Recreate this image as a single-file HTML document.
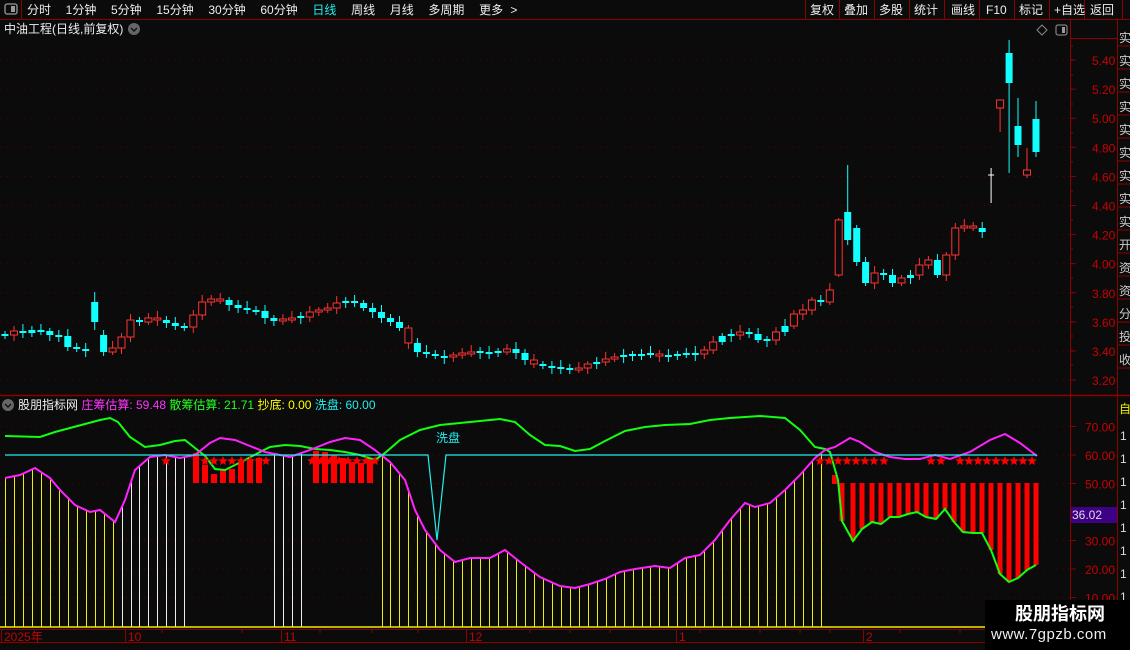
<!DOCTYPE html>
<html><head><meta charset="utf-8"><style>
*{margin:0;padding:0;box-sizing:border-box}
body{width:1130px;height:650px;background:#0b0b0b;overflow:hidden;position:relative;font-family:"Liberation Sans","Noto Sans CJK SC",sans-serif;color:#ddd}
.t{position:absolute;font-size:12px;white-space:nowrap;line-height:14px}
</style></head><body>
<svg id="s" width="1130" height="650" style="position:absolute;left:0;top:0" xmlns="http://www.w3.org/2000/svg"></svg>
<div class="t" style="left:27px;top:3px;color:#eee;word-spacing:4px">分时&nbsp; 1分钟&nbsp; 5分钟&nbsp; 15分钟&nbsp; 30分钟&nbsp; 60分钟&nbsp; <span style="color:#2ee">日线</span>&nbsp; 周线&nbsp; 月线&nbsp; 多周期&nbsp; 更多 &gt;</div>
<div class="t" style="left:4px;top:22px;color:#eee">中油工程(日线,前复权)</div>
<div class="t" style="left:18px;top:398px;color:#eee">股朋指标网 <span style="color:#f3f">庄筹估算: 59.48</span> <span style="color:#2f2">散筹估算: 21.71</span> <span style="color:#ff0">抄底: 0.00</span> <span style="color:#2ee">洗盘: 60.00</span></div>
<div class="t" style="left:436px;top:431px;color:#2ee">洗盘</div>
<div style="position:absolute;left:985px;top:600px;width:145px;height:50px;background:#000"></div>
<div class="t" style="left:1015px;top:603px;font-size:18px;line-height:22px;color:#fff;font-weight:bold">股朋指标网</div>
<div class="t" style="left:991px;top:626px;font-size:15px;line-height:18px;color:#eee;letter-spacing:.5px">www.7gpzb.com</div>
<script>
const S=document.getElementById('s');let h='';
const R='#8b0000';
h+=`<rect x="0" y="0" width="1130" height="20" fill="#0b0b0b"/><line x1="0" y1="19.5" x2="1130" y2="19.5" stroke="${R}"/>`;
h+=`<line x1="21.5" y1="0" x2="21.5" y2="19" stroke="${R}"/><rect x="5" y="4" width="12" height="10" rx="2" fill="none" stroke="#999" stroke-width="1.3"/><rect x="11" y="6" width="4" height="6" fill="#999"/>`;
const rb=[['复权',806],['叠加',840],['多股',875],['统计',910],['画线',947],['F10',982],['标记',1015],['+自选',1050],['返回',1086]];
const sep=[805,839,874,909,944,979,1014,1049,1084,1122];
sep.forEach(x=>h+=`<line x1="${x+.5}" y1="0" x2="${x+.5}" y2="19" stroke="${R}"/>`);
rb.forEach(([t,x])=>h+=`<text x="${x+4}" y="14" fill="#eee" font-size="12">${t}</text>`);
h+=`<circle cx="134" cy="29" r="6" fill="#666"/><path d="M131 28l3 3 3-3" stroke="#111" fill="none" stroke-width="1.4"/>`;
h+=`<circle cx="8" cy="405" r="6" fill="#666"/><path d="M5 404l3 3 3-3" stroke="#111" fill="none" stroke-width="1.4"/>`;
h+=`<path d="M1042 25l5 5-5 5-5-5z" stroke="#888" fill="none"/><rect x="1056" y="25" width="11" height="10" rx="2" fill="none" stroke="#999"/><rect x="1062" y="27" width="3" height="6" fill="#999"/>`;
h+=`<line x1="1070.5" y1="20" x2="1070.5" y2="628" stroke="${R}"/><line x1="1117.5" y1="20" x2="1117.5" y2="650" stroke="${R}"/>`;
h+=`<line x1="0" y1="395.5" x2="1130" y2="395.5" stroke="${R}" stroke-width="1.5"/>`;
h+=`<line x1="1070" y1="38.5" x2="1117" y2="38.5" stroke="${R}"/>`;
for(let i=0;i<12;i++){const p=5.4-i*0.2,y=60+i*29.1;h+=`<line x1="0" y1="${y}" x2="1070" y2="${y}" stroke="#5a0000" stroke-dasharray="1 5"/><line x1="1070" y1="${y}" x2="1076" y2="${y}" stroke="${R}"/><text x="1092" y="${y+5}" fill="#c80000" font-size="12">${p.toFixed(2)}</text>`;}
for(let i=0;i<23;i++){const y=46+i*14.5;h+=`<line x1="1070" y1="${y}" x2="1073" y2="${y}" stroke="${R}"/>`;}
const rc='实实实实实实实实实开资资分投收';for(let i=0;i<15;i++){h+=`<text x="1119" y="${42+i*23}" fill="#ccc" font-size="12">${rc[i]}</text><line x1="1117" y1="${46+i*23}" x2="1130" y2="${46+i*23}" stroke="${R}"/>`;}
h+=`<text x="1119" y="413" fill="#ee0" font-size="12">自</text>`;
for(let i=0;i<9;i++)h+=`<text x="1120" y="${440+i*23}" fill="#ddd" font-size="12">1</text>`;
const M=[335,331,333,330,331,335,336,347,349,350,335,352,348,337,320,322,318,320,323,326,327,315,302,299,300,305,308,310,311,318,321,320,318,317,312,310,308,303,301,303,308,312,318,322,328,343,352,354,356,357,355,353,353,352,353,352,349,353,360,364,366,367,368,370,368,364,362,359,357,356,355,355,354,356,356,355,354,354,350,342,336,335,332,334,340,340,332,326,314,310,300,302,290,262,228,262,283,273,275,283,278,275,265,260,275,255,228,226,228,232,186,104,68,135,172,136];
const C='#1ff',Rd='#ff3333';const SP=8.965;
M.forEach((m,i)=>{const x=+(5+i*SP).toFixed(1);const prev=i?M[i-1]:m;let o=prev,c=m;let col;
 if(Math.abs(o-c)<1.5){o=m-1;c=m+1;}
 col=c<o?Rd:C; if(i%7==3)col=(col==C?Rd:C);
 let top=Math.min(o,c),bot=Math.max(o,c);if(bot-top<2)bot=top+2;
 let hi=top-3-(i*7%5),lo=bot+3+(i*3%4);
 if(i==10){top=302;bot=322;hi=292;lo=330;col=C}
 if(i==94){top=212;bot=240;hi=165;lo=245;col=C}
 if(i==93){top=220;bot=275;hi=218;lo=277;col=Rd}
 if(i==110){top=175;bot=177;hi=168;lo=203;col='#fff'}
 if(i==111){top=100;bot=108;hi=100;lo=132;col=Rd}
 if(i==112){top=53;bot=83;hi=40;lo=173;col=C}
 if(i==113){top=126;bot=145;hi=98;lo=157;col=C}
 if(i==114){top=170;bot=175;hi=148;lo=178;col=Rd}
 if(i==115){top=119;bot=152;hi=101;lo=157;col=C}
 const x0=(x-3.5).toFixed(1);
 h+=`<line x1="${x}" y1="${hi}" x2="${x}" y2="${lo}" stroke="${col}"/>`;
 if(col==C)h+=`<rect x="${x0}" y="${top}" width="7" height="${bot-top}" fill="${C}"/>`;
 else if(col=='#fff')h+=`<line x1="${x-3}" y1="${top}" x2="${x+3}" y2="${top}" stroke="#fff"/>`;
 else h+=`<rect x="${x0}" y="${top}" width="7" height="${bot-top}" fill="#0b0b0b" stroke="${Rd}"/>`;
});
[70,60,50,40,30,20,10].forEach(v=>{const y=455+(60-v)*2.85;h+=`<line x1="0" y1="${y}" x2="1070" y2="${y}" stroke="#5a0000" stroke-dasharray="1 5"/><line x1="1070" y1="${y}" x2="1076" y2="${y}" stroke="${R}"/>`;if(v!=40)h+=`<text x="1085" y="${y+5}" fill="#c80000" font-size="12">${v}.00</text>`;});
h+=`<rect x="1071" y="507" width="46" height="16" fill="#3f0088"/><text x="1072" y="519" fill="#ddd" font-size="12">36.02</text>`;
const MG=[[5,478],[20,475],[35,468],[50,478],[60,490],[75,505],[90,512],[100,510],[115,522],[125,500],[135,470],[150,457],[165,455],[180,458],[195,455],[210,443],[220,438],[235,440],[250,446],[265,452],[290,457],[310,450],[330,442],[345,438],[360,440],[375,450],[390,462],[405,480],[415,510],[425,530],[440,550],[455,562],[470,558],[490,558],[505,550],[520,562],[540,577],[560,586],[575,588],[590,584],[605,579],[620,572],[635,569],[655,566],[670,568],[685,558],[700,555],[715,540],[730,520],[745,503],[755,507],[770,503],[785,490],[800,475],[815,458],[825,450],[835,447],[850,438],[860,442],[875,452],[890,457],[905,459],[920,459],[935,455],[950,459],[970,452],[990,440],[1005,434],[1020,443],[1037,456]];
function interp(P,x){for(let i=1;i<P.length;i++)if(x<=P[i][0]){const a=P[i-1],b=P[i];return a[1]+(b[1]-a[1])*(x-a[0])/(b[0]-a[0]);}return P[P.length-1][1];}
for(let i=0;i<93;i++){const x=Math.round(5+i*SP)+.5;if(x>828)continue;if((x>190&&x<270)||(x>310&&x<382))continue;const y=interp(MG,x);const col=(x>120&&x<190)||(x>270&&x<310)?'#eee':'#ee0';h+=`<line x1="${x}" y1="${y}" x2="${x}" y2="627" stroke="${col}"/>`;}
h+=`<line x1="0" y1="627" x2="1070" y2="627" stroke="#ee0" stroke-width="1.5"/>`;
[[196,453],[205,465],[214,474],[223,470],[232,469],[241,462],[250,459],[259,458]].forEach(([x,y])=>h+=`<rect x="${x-3}" y="${y}" width="6" height="${483-y}" fill="#f00"/>`);
[[316,451],[325,452],[334,455],[343,458],[352,462],[361,463],[370,458]].forEach(([x,y])=>h+=`<rect x="${x-3}" y="${y}" width="6" height="${483-y}" fill="#f00"/>`);
const RB=[[842,521],[853,541],[862,529],[872,522],[881,524],[890,517],[899,517],[908,514],[917,512],[926,517],[936,519],[945,509],[954,522],[963,532],[973,533],[982,533],[991,550],[1000,574],[1009,582],[1018,578],[1027,570],[1036,565]];
RB.forEach(([x,y])=>h+=`<rect x="${x-2.5}" y="483" width="5" height="${y-483}" fill="#f00"/>`);
h+=`<rect x="832" y="475" width="5" height="9" fill="#f00"/>`;
const GR=[[5,436],[40,437],[55,432],[70,428],[85,424],[100,420],[110,418],[118,422],[130,437],[145,447],[160,445],[175,441],[185,440],[195,448],[205,456],[215,469],[225,470],[235,465],[245,460],[260,452],[270,447],[285,445],[300,446],[315,449],[330,450],[345,452],[360,455],[375,460],[385,453],[400,440],[420,430],[440,425],[460,423],[480,421],[500,419],[515,422],[530,435],[545,445],[560,446],[575,451],[590,449],[605,441],[625,431],[645,427],[665,425],[690,424],[710,420],[730,418],[760,416],[785,418],[800,430],[815,447],[825,449],[830,452],[838,480]].concat(RB.map(([x,y])=>[x,y]));
const pl=P=>P.map(p=>p.join(',')).join(' ');
h+=`<polyline points="${pl(GR)}" fill="none" stroke="#1f1" stroke-width="2"/>`;
h+=`<polyline points="${pl(MG)}" fill="none" stroke="#f2f" stroke-width="2"/>`;
h+=`<polyline points="5,455 428,455 437,540 446,455 1037,455" fill="none" stroke="#2ee" stroke-width="1.2"/>`;
function star(cx,cy){let p=[];for(let k=0;k<10;k++){const r=k%2?2.2:5,a=-Math.PI/2+k*Math.PI/5;p.push((cx+r*Math.cos(a)).toFixed(1)+','+(cy+r*Math.sin(a)).toFixed(1));}return `<polygon points="${p.join(' ')}" fill="#f00"/>`;}
const st=[166,205,214,223,232,241,250,259,266,312,321,330,339,348,357,366,375,820,829,838,847,856,865,874,884,931,941,960,969,978,987,996,1005,1014,1023,1032];
st.forEach(x=>h+=star(x,461));
h+=`<line x1="0" y1="629.5" x2="1070" y2="629.5" stroke="${R}"/><line x1="0" y1="642.5" x2="1130" y2="642.5" stroke="${R}"/>`;
[['2025年',4],['10',128],['11',284],['12',469],['1',679],['2',866]].forEach(([t,x])=>{h+=`<line x1="${x-2.5}" y1="630" x2="${x-2.5}" y2="642" stroke="${R}"/><text x="${x}" y="641" fill="#c80000" font-size="12">${t}</text>`;});
[162,242,320,372,418,530,570,610,700,760,800,830,900,960,1020].forEach(x=>h+=`<line x1="${x}" y1="630" x2="${x}" y2="633" stroke="${R}"/>`);
S.innerHTML=h;
</script>
</body></html>
